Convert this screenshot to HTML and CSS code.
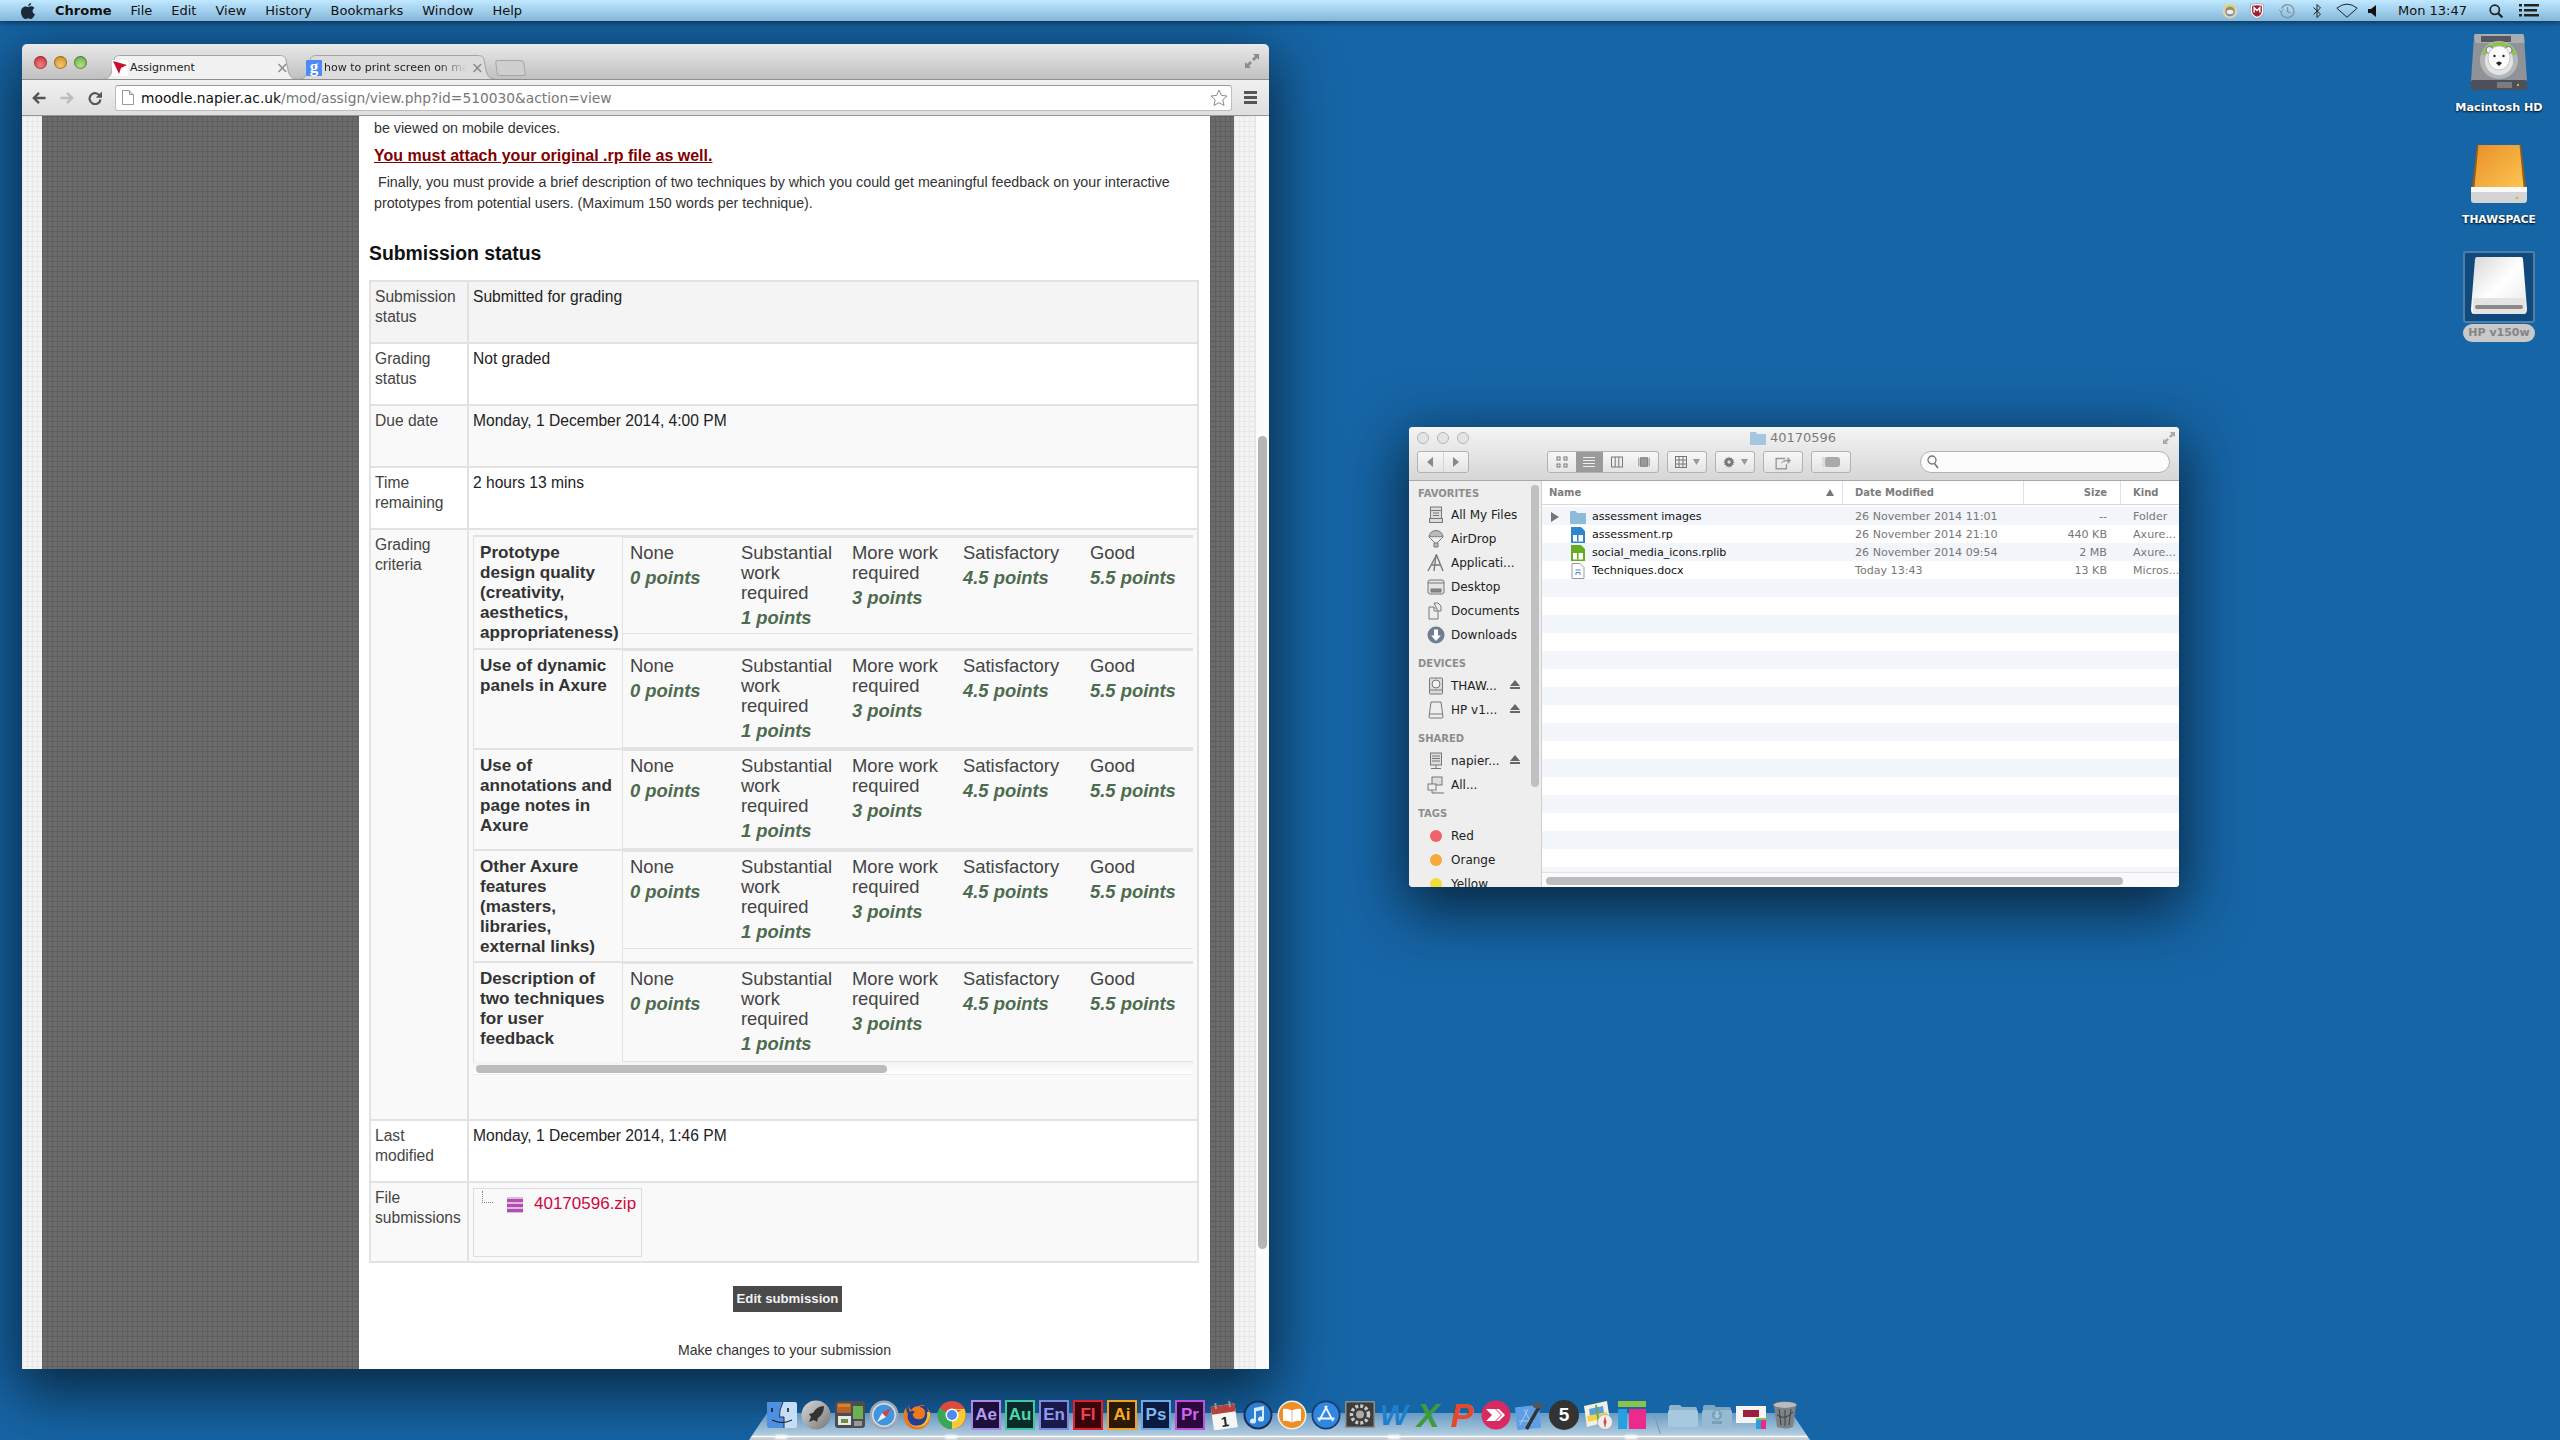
FILE: index.html
```html
<!DOCTYPE html>
<html lang="en">
<head>
  <meta charset="UTF-8">
  <title>Desktop - Assignment</title>
  <link rel="stylesheet" href="styles.css">
</head>
<body>
  <!-- menu bar -->
  <div class="menubar">
    <svg class="apple" viewBox="0 0 16 18"><path d="M11.2 1c.1 1.500-1.300 3.200-3 3.100C8 2.600 9.600 1.100 11.200 1zM8.300 5c.9 0 1.700-.7 3-.7 1.200 0 2.400.6 3.100 1.700-2.700 1.500-2.200 5.200.6 6.300-.8 2-2.400 4.700-3.900 4.700-1.200 0-1.600-.8-2.900-.8-1.400 0-1.800.8-3 .8C3.300 17 1 13.300 1 10c0-3.400 2.200-5.600 4.500-5.600 1.200 0 2.100.6 2.800.6z"/></svg>
    <span class="menu-app">Chrome</span>
    <span>File</span>
    <span>Edit</span>
    <span>View</span>
    <span>History</span>
    <span>Bookmarks</span>
    <span>Window</span>
    <span>Help</span>
    <div class="status">
      <svg class="st-monkey" viewBox="0 0 16 16"><circle cx="8" cy="8" r="7.500" fill="#d9d3b8"/><path d="M2 6a6.500 6.500 0 0 1 12 0z" fill="#e6cf5a"/><circle cx="8" cy="8.500" r="4.800" fill="#8b8b8b"/><ellipse cx="8" cy="9" rx="3.400" ry="2.200" fill="#eee"/></svg>
      <svg class="st-shield" viewBox="0 0 16 17"><path d="M1 1.500Q8-.5 15 1.500V9c0 3.500-3.500 6-7 7.500C4.500 15 1 12.500 1 9z" fill="#fff" stroke="#888" stroke-width=".6"/><path d="M2.800 3Q8 1.600 13.200 3v6c0 2.500-2.600 4.500-5.200 5.700C5.400 13.500 2.800 11.500 2.800 9z" fill="#a11f33"/><path d="M5 10V5l3 3 3-3v5" fill="none" stroke="#fff" stroke-width="1.500"/></svg>
      <svg class="st-clock" viewBox="0 0 16 16" fill="none" stroke="#8494a2" stroke-width="1.300"><path d="M2.500 5.500A6.500 6.500 0 1 1 2 9"/><path d="M0 6.500l2 2.500 2.500-2.500" stroke-width="1"/><path d="M8.500 4v4.500l3 1.500"/></svg>
      <svg class="st-bt" viewBox="0 0 10 16" fill="none" stroke="#222" stroke-width="1"><path d="M1.500 4.500l7 6.500L5 14.500v-13L8.500 5l-7 6.500"/></svg>
      <svg class="st-wifi" viewBox="0 0 22 15" fill="none" stroke="#222" stroke-width="1"><path d="M.8 5.200Q11-3 21.200 5.200L11 14.200z"/></svg>
      <svg class="st-vol" viewBox="0 0 8 12"><path d="M0 4h3l5-4v12L3 8H0z" fill="#111"/></svg>
      <span class="clock">Mon 13:47</span>
      <svg class="st-search" viewBox="0 0 14 14" fill="none" stroke="#222" stroke-width="1.700"><circle cx="5.800" cy="5.800" r="4.600"/><path d="M9.200 9.200l4.200 4.200" stroke-width="2.200"/></svg>
      <svg class="st-list" viewBox="0 0 20 13" fill="#222"><rect x="0" y="0" width="3" height="2.500"/><rect x="5" y="0" width="15" height="2.500"/><rect x="0" y="5" width="3" height="2.500"/><rect x="5" y="5" width="13" height="2.500"/><rect x="0" y="10" width="3" height="2.500"/><rect x="5" y="10" width="15" height="2.500"/></svg>
    </div>
  </div>

  <!-- desktop volumes -->
  <div class="volumes">
    <div class="volume vol-hd">
      <svg class="vol-icon" viewBox="0 0 56 58">
        <path d="M5 1h46q2 0 2 2l3 45H0L3 3q0-2 2-2z" fill="#8f9296"/>
        <path d="M5 1h46q2 0 2 2l.5 7h-49L3 3q0-2 2-2z" fill="#a9acb0"/>
        <rect x="0" y="47" width="56" height="10" rx="1.500" fill="#4c5058"/>
        <rect x="26" y="49" width="15" height="6" fill="#787b80"/>
        <circle cx="47" cy="52" r="1" fill="#e8d84a"/>
        <rect x="10" y="3" width="30" height="6" fill="#55585c"/>
        <circle cx="28" cy="27" r="19" fill="#b4b7ba"/>
        <path d="M12 22a17 17 0 0 1 32 0" fill="none" stroke="#8cc63f" stroke-width="3"/>
        <circle cx="28" cy="28" r="14" fill="#e4e4e4"/>
        <circle cx="18.500" cy="17" r="3.500" fill="#eee" stroke="#555" stroke-width=".7"/>
        <circle cx="37.500" cy="17" r="3.500" fill="#eee" stroke="#555" stroke-width=".7"/>
        <ellipse cx="28" cy="25" rx="11" ry="12" fill="#fbfbfb" stroke="#999" stroke-width=".5"/>
        <circle cx="23.500" cy="23" r="1.200" fill="#222"/>
        <circle cx="32.500" cy="23" r="1.200" fill="#222"/>
        <path d="M25 30q3-3 6 0l-3 3z" fill="#222"/>
      </svg>
      <span class="vol-label">Macintosh HD</span>
    </div>
    <div class="volume vol-thaw">
      <svg class="vol-icon" viewBox="0 0 56 58">
        <defs><linearGradient id="thaw" x1="0" y1="0" x2="1" y2="1"><stop offset="0" stop-color="#e8902a"/><stop offset="1" stop-color="#fdc450"/></linearGradient></defs>
        <path d="M6 0h44l5 42H1z" fill="#9c5d10"/>
        <path d="M7.500 0h41l4 42H3.500z" fill="url(#thaw)"/>
        <rect x="0" y="42" width="56" height="16" rx="3" fill="#d4d4d4"/>
        <rect x="0" y="42" width="56" height="5" fill="#fafafa"/>
        <circle cx="46" cy="53" r="1.300" fill="#d9b93a"/>
      </svg>
      <span class="vol-label vol-label-caps">THAWSPACE</span>
    </div>
    <div class="volume vol-hp">
      <div class="vol-selected">
        <svg class="vol-icon" viewBox="0 0 56 58">
          <defs><linearGradient id="hp" x1="0" y1="0" x2="1" y2="1"><stop offset="0" stop-color="#d6d6d6"/><stop offset=".5" stop-color="#fff"/><stop offset="1" stop-color="#e8e8e8"/></linearGradient></defs>
          <path d="M6 0h44q2 0 2 2l4 50q0 5-3 5H3q-3 0-3-5L4 2q0-2 2-2z" fill="url(#hp)"/>
          <path d="M2 41h52v16H2z" fill="#e4e4e4"/>
          <rect x="4" y="48" width="48" height="4" rx="2" fill="#8a8a8a"/>
        </svg>
      </div>
      <span class="vol-pill">HP v150w</span>
    </div>
  </div>

  <!-- chrome window -->
  <div class="window browser">
    <div class="tabstrip">
      <div class="lights">
        <i class="light red"></i><i class="light amber"></i><i class="light green"></i>
      </div>
      <div class="tab tab-active">
        <svg class="tab-shape" viewBox="0 0 194 24" preserveAspectRatio="none"><path d="M0 24C6 24 8 20 9 15L11 5C12 1 14 .5 18 .5H176C180 .5 182 1 183 5L185 15C186 20 188 24 194 24" fill="#f1f1f1" stroke="#a3a3a3"/></svg>
        <span class="favicon fav-napier"><svg viewBox="0 0 16 16"><path d="M1 1l14 4-6 3-2 6z" fill="#c8102e"/></svg></span>
        <span class="tab-title">Assignment</span>
        <span class="tab-close">×</span>
      </div>
      <div class="tab tab-back">
        <svg class="tab-shape" viewBox="0 0 196 24" preserveAspectRatio="none"><path d="M0 24C6 24 8 20 9 15L11 5C12 1 14 .5 18 .5H178C182 .5 184 1 185 5L187 15C188 20 190 24 196 24" fill="#dcdcdc" stroke="#a3a3a3"/></svg>
        <span class="favicon fav-google">g</span>
        <span class="tab-title tab-fade">how to print screen on mac</span>
        <span class="tab-close">×</span>
      </div>
      <div class="tab-new"></div>
      <svg class="expand" viewBox="0 0 14 14"><path d="M14 0v6l-2-2-3 3-2-2 3-3-2-2zM0 14V8l2 2 3-3 2 2-3 3 2 2z" fill="#8c8c8c"/></svg>
    </div>
    <div class="toolbar">
      <svg class="nav-icon nav-back" viewBox="0 0 14 14" fill="none" stroke="#555" stroke-width="2.400"><path d="M13.500 7H2M7 1.800L1.800 7 7 12.200"/></svg>
      <svg class="nav-icon nav-fwd" viewBox="0 0 14 14" fill="none" stroke="#bdbdbd" stroke-width="2.400"><path d="M.5 7H12M7 1.800L12.200 7 7 12.200"/></svg>
      <svg class="nav-icon nav-reload" viewBox="0 0 14 14"><path d="M12 5.200A5.500 5.500 0 1 0 12.500 8.500" fill="none" stroke="#555" stroke-width="2.200"/><path d="M14 .5v6.300H7.700z" fill="#555"/></svg>
      <div class="omnibox">
        <svg class="page-icon" viewBox="0 0 12 15"><path d="M.5.500h7l4 4v10H.5z" fill="#fff" stroke="#999"/><path d="M7.500.500v4h4" fill="#ddd" stroke="#999"/></svg>
        <span class="url"><span class="url-host">moodle.napier.ac.uk</span>/mod/assign/view.php?id=510030&amp;action=view</span>
        <svg class="star" viewBox="0 0 18 18"><path d="M9 1l2.400 5.400 5.600.6-4.200 3.800 1.200 5.700L9 13.600 4 16.500l1.200-5.700L1 7l5.600-.6z" fill="#fff" stroke="#8a8a8a"/></svg>
      </div>
      <div class="hamburger"><i></i><i></i><i></i></div>
    </div>
    <div class="viewport">
      <div class="bg-light"></div>
      <div class="bg-dark"></div>
      <div class="page">
        <p class="copy">be viewed on mobile devices.</p>
        <p class="warning">You must attach your original .rp file as well.</p>
        <p class="copy copy-long">&nbsp;Finally, you must provide a brief description of two techniques by which you could get meaningful feedback on your interactive prototypes from potential users. (Maximum 150 words per technique).</p>
        <h2>Submission status</h2>
        <table class="status-table">
          <tr class="row-first"><th>Submission status</th><td>Submitted for grading</td></tr>
          <tr class="row-white"><th>Grading status</th><td>Not graded</td></tr>
          <tr class="row-grey"><th>Due date</th><td>Monday, 1 December 2014, 4:00 PM</td></tr>
          <tr class="row-white"><th>Time remaining</th><td>2 hours 13 mins</td></tr>
          <tr class="row-grey row-rubric">
            <th>Grading criteria</th>
            <td class="rubric-cell">
              <div class="rubric">
                <div class="crit-row">
                  <div class="crit">Prototype<br>design quality<br>(creativity,<br>aesthetics,<br>appropriateness)</div>
                  <div class="levels">
                    <div class="level">None<em>0 points</em></div>
                    <div class="level">Substantial work required<em>1 points</em></div>
                    <div class="level">More work required<em>3 points</em></div>
                    <div class="level">Satisfactory<em>4.5 points</em></div>
                    <div class="level">Good<em>5.5 points</em></div>
                  </div>
                </div>
                <div class="crit-row">
                  <div class="crit">Use of dynamic<br>panels in Axure</div>
                  <div class="levels">
                    <div class="level">None<em>0 points</em></div>
                    <div class="level">Substantial work required<em>1 points</em></div>
                    <div class="level">More work required<em>3 points</em></div>
                    <div class="level">Satisfactory<em>4.5 points</em></div>
                    <div class="level">Good<em>5.5 points</em></div>
                  </div>
                </div>
                <div class="crit-row">
                  <div class="crit">Use of<br>annotations and<br>page notes in<br>Axure</div>
                  <div class="levels">
                    <div class="level">None<em>0 points</em></div>
                    <div class="level">Substantial work required<em>1 points</em></div>
                    <div class="level">More work required<em>3 points</em></div>
                    <div class="level">Satisfactory<em>4.5 points</em></div>
                    <div class="level">Good<em>5.5 points</em></div>
                  </div>
                </div>
                <div class="crit-row">
                  <div class="crit">Other Axure<br>features<br>(masters,<br>libraries,<br>external links)</div>
                  <div class="levels">
                    <div class="level">None<em>0 points</em></div>
                    <div class="level">Substantial work required<em>1 points</em></div>
                    <div class="level">More work required<em>3 points</em></div>
                    <div class="level">Satisfactory<em>4.5 points</em></div>
                    <div class="level">Good<em>5.5 points</em></div>
                  </div>
                </div>
                <div class="crit-row">
                  <div class="crit">Description of<br>two techniques<br>for user<br>feedback</div>
                  <div class="levels">
                    <div class="level">None<em>0 points</em></div>
                    <div class="level">Substantial work required<em>1 points</em></div>
                    <div class="level">More work required<em>3 points</em></div>
                    <div class="level">Satisfactory<em>4.5 points</em></div>
                    <div class="level">Good<em>5.5 points</em></div>
                  </div>
                </div>
              </div>
              <div class="rubric-scroll"><i></i></div>
            </td>
          </tr>
          <tr class="row-white"><th>Last modified</th><td>Monday, 1 December 2014, 1:46 PM</td></tr>
          <tr class="row-grey row-files">
            <th>File submissions</th>
            <td class="files-cell">
              <div class="filetree">
                <i class="tree-line"></i>
                <svg class="zip-icon" viewBox="0 0 16 16"><rect width="16" height="16" fill="#e0b8e0"/><rect y="2" width="16" height="3" fill="#b04fb0"/><rect y="7" width="16" height="3" fill="#b04fb0"/><rect y="12" width="16" height="3" fill="#b04fb0"/></svg>
                <a class="zip-link">40170596.zip</a>
              </div>
            </td>
          </tr>
        </table>
        <div class="submit-row"><button class="edit-btn">Edit submission</button></div>
        <p class="submit-note">Make changes to your submission</p>
      </div>
      <div class="bg-dark bg-dark-r"></div>
      <div class="bg-light bg-light-r"></div>
      <div class="scrolltrack"><i></i></div>
    </div>
  </div>

  <!-- finder window -->
  <div class="window finder">
    <div class="finder-head">
      <div class="finder-title">
        <div class="f-lights"><i></i><i></i><i></i></div>
        <svg class="title-folder" viewBox="0 0 16 14"><path d="M0 2q0-1 1-1h5l1 2h8q1 0 1 1v9q0 1-1 1H1q-1 0-1-1z" fill="#a4c6df"/></svg>
        <span>40170596</span>
        <svg class="f-expand" viewBox="0 0 14 14"><path d="M14 0v6l-2-2-3 3-2-2 3-3-2-2zM0 14V8l2 2 3-3 2 2-3 3 2 2z" fill="#aaa"/></svg>
      </div>
      <div class="finder-tools">
        <div class="btn btn-nav">
          <span><svg viewBox="0 0 8 12"><path d="M7 1v10L1 6z" fill="#888"/></svg></span>
          <span><svg viewBox="0 0 8 12"><path d="M1 1v10l6-5z" fill="#888"/></svg></span>
        </div>
        <div class="btn btn-views">
          <span><svg viewBox="0 0 12 12" fill="none" stroke="#777"><rect x="1" y="1" width="3" height="3"/><rect x="8" y="1" width="3" height="3"/><rect x="1" y="8" width="3" height="3"/><rect x="8" y="8" width="3" height="3"/></svg></span>
          <span class="seg-on"><svg viewBox="0 0 12 12" stroke="#eee"><path d="M0 1.500h12M0 4.500h12M0 7.500h12M0 10.500h12"/></svg></span>
          <span><svg viewBox="0 0 12 12" fill="none" stroke="#777"><rect x=".5" y="1" width="11" height="10"/><path d="M4.200 1v10M7.800 1v10"/></svg></span>
          <span><svg viewBox="0 0 14 12" fill="none" stroke="#777"><rect x="3" y="1" width="8" height="10" fill="#999"/><path d="M1 1v10M13 1v10"/></svg></span>
        </div>
        <div class="btn btn-menu">
          <svg viewBox="0 0 12 12" fill="none" stroke="#777"><rect x=".5" y=".5" width="11" height="11"/><path d="M.5 4h11M.5 8h11M4 .5v11M8 .5v11"/></svg>
          <svg class="caret" viewBox="0 0 7 6"><path d="M0 0h7L3.500 6z" fill="#999"/></svg>
        </div>
        <div class="btn btn-menu">
          <svg viewBox="0 0 14 14"><path d="M7 .5l1 2 2-.8.4 2.100 2.100.4-.8 2 2 1-2 1 .8 2-2.100.4-.4 2.100-2-.8-1 2-1-2-2 .8-.4-2.100-2.100-.4.8-2-2-1 2-1-.8-2 2.100-.4.4-2.100 2 .8z" fill="#777"/><circle cx="7" cy="7" r="2" fill="#ddd"/></svg>
          <svg class="caret" viewBox="0 0 7 6"><path d="M0 0h7L3.500 6z" fill="#999"/></svg>
        </div>
        <div class="btn btn-single">
          <svg viewBox="0 0 14 13" fill="none" stroke="#999" stroke-width="1.200"><path d="M9 3H1v9h9V8"/><path d="M5 8q1-4 6-4V1.500L14 5l-3 3V5.500Q7 5.500 5 8z" fill="#999" stroke="none"/></svg>
        </div>
        <div class="btn btn-single btn-tag"><i></i></div>
        <div class="searchbox">
          <svg viewBox="0 0 12 14" fill="none" stroke="#777" stroke-width="1.300"><circle cx="5" cy="5" r="4"/><path d="M7.500 8.500L11 13" stroke-width="1.800"/></svg>
        </div>
      </div>
    </div>
    <div class="finder-body">
      <div class="sidebar">
        <div class="side-head side-head-first">FAVORITES</div>
        <div class="side-item"><svg viewBox="0 0 16 18" fill="#dcdcdc" stroke="#777"><rect x="2.500" y="1" width="11" height="3.500"/><rect x="2.500" y="4.500" width="11" height="8"/><rect x="1.500" y="12.500" width="13" height="4"/><path d="M5 7h6M5 9.500h6" fill="none"/></svg>All My Files</div>
        <div class="side-item"><svg viewBox="0 0 16 18" fill="#bbb" stroke="#777"><path d="M1 7a7 6.500 0 0 1 14 0q-1.700-1.500-3.500 0Q9.700 5.500 8 7 6.300 5.500 4.500 7 2.700 5.500 1 7z"/><path d="M1 7l6 6M15 7l-6 6M6 13h4v4H6z"/></svg>AirDrop</div>
        <div class="side-item"><svg viewBox="0 0 18 18" fill="none" stroke="#777" stroke-width="1.400"><path d="M1 17L9.500 1 16 17M5 11h9"/><path d="M9 1l-2 16"/></svg>Applicati...</div>
        <div class="side-item"><svg viewBox="0 0 18 16" fill="#e4e4e4" stroke="#777"><rect x="1" y="1" width="16" height="14" rx="2"/><path d="M1 4h16"/><rect x="4" y="10" width="10" height="3" fill="#888"/></svg>Desktop</div>
        <div class="side-item"><svg viewBox="0 0 16 18" fill="#eee" stroke="#777"><path d="M6 1h4l3 3v5h-3z"/><path d="M1 5h5l4 4v8H1z"/><path d="M6 5v4h4"/></svg>Documents</div>
        <div class="side-item"><svg viewBox="0 0 18 18"><circle cx="9" cy="9" r="8.500" fill="#6f7f90"/><path d="M7 3.500h4v6h3l-5 5.500-5-5.500h3z" fill="#fff"/></svg>Downloads</div>
        <div class="side-head">DEVICES</div>
        <div class="side-item"><svg viewBox="0 0 16 18" fill="#ddd" stroke="#777"><rect x="1.500" y="1" width="13" height="16" rx="1"/><circle cx="8" cy="7" r="4" fill="#f2f2f2"/><path d="M2 13h12"/></svg>THAW...<i class="eject"></i></div>
        <div class="side-item"><svg viewBox="0 0 16 18" fill="#eee" stroke="#777"><path d="M3 1h10l2 15q0 1-1 1H2q-1 0-1-1z"/><path d="M1.500 13h13"/></svg>HP v1...<i class="eject"></i></div>
        <div class="side-head">SHARED</div>
        <div class="side-item"><svg viewBox="0 0 16 18" fill="#ddd" stroke="#777"><rect x="2.500" y="1" width="11" height="12"/><path d="M4 4h8M4 6.500h8M4 9h8M8 13v3M3 16.500h10"/></svg>napier...<i class="eject"></i></div>
        <div class="side-item"><svg viewBox="0 0 18 18" fill="#ddd" stroke="#777"><rect x="5" y="1" width="10" height="8"/><rect x="1" y="8" width="8" height="6" fill="#eee"/><path d="M5 14v3h12"/></svg>All...</div>
        <div class="side-head">TAGS</div>
        <div class="side-item"><i class="tag tag-red"></i>Red</div>
        <div class="side-item"><i class="tag tag-orange"></i>Orange</div>
        <div class="side-item"><i class="tag tag-yellow"></i>Yellow</div>
        <i class="side-scroll"></i>
      </div>
      <div class="listpane">
        <div class="list-head">
          <span class="col-name">Name<svg viewBox="0 0 8 7"><path d="M4 0l4 7H0z" fill="#777"/></svg></span>
          <span class="col-date">Date Modified</span>
          <span class="col-size">Size</span>
          <span class="col-kind">Kind</span>
        </div>
        <div class="list-rows">
          <div class="file">
            <span class="col-name"><svg class="disclose" viewBox="0 0 8 10"><path d="M0 0l8 5-8 5z" fill="#777"/></svg><svg class="file-icon" viewBox="0 0 16 14"><path d="M0 2q0-1 1-1h5l1 2h8q1 0 1 1v9q0 1-1 1H1q-1 0-1-1z" fill="#8fbbdb"/></svg><b>assessment images</b></span>
            <span class="col-date">26 November 2014 11:01</span><span class="col-size">--</span><span class="col-kind">Folder</span>
          </div>
          <div class="file">
            <span class="col-name"><svg class="file-icon" viewBox="0 0 14 16"><path d="M0 0h10l4 4v12H0z" fill="#2f86cf"/><rect x="2" y="6" width="10" height="8.500" fill="#fff"/><rect x="2" y="6" width="10" height="2" fill="#2f86cf"/><rect x="6" y="8" width="1.500" height="6.500" fill="#2f86cf"/></svg><b>assessment.rp</b></span>
            <span class="col-date">26 November 2014 21:10</span><span class="col-size">440 KB</span><span class="col-kind">Axure...</span>
          </div>
          <div class="file">
            <span class="col-name"><svg class="file-icon" viewBox="0 0 14 16"><path d="M0 0h10l4 4v12H0z" fill="#63ad1f"/><rect x="2" y="6" width="10" height="8.500" fill="#fff"/><rect x="2" y="6" width="10" height="2" fill="#63ad1f"/><rect x="6" y="8" width="1.500" height="6.500" fill="#63ad1f"/></svg><b>social_media_icons.rplib</b></span>
            <span class="col-date">26 November 2014 09:54</span><span class="col-size">2 MB</span><span class="col-kind">Axure...</span>
          </div>
          <div class="file">
            <span class="col-name"><svg class="file-icon" viewBox="0 0 14 16"><path d="M1 .5h8l4 4v11H1z" fill="#fff" stroke="#999"/><path d="M5 12V9.500h4V12M4.500 7h5" fill="none" stroke="#3c87c4"/></svg><b>Techniques.docx</b></span>
            <span class="col-date">Today 13:43</span><span class="col-size">13 KB</span><span class="col-kind">Micros...</span>
          </div>
        </div>
        <div class="list-scroll"><i></i></div>
      </div>
    </div>
  </div>

  <!-- dock -->
  <div class="dock">
    <div class="dock-icons">
      <svg class="dk" viewBox="0 0 30 30"><rect y="2" width="30" height="26" rx="2" fill="#c6def5"/><path d="M2 2h14q-4 8-3.500 15H17v11H2q-2 0-2-2V4q0-2 2-2z" fill="#4d8fe0"/><path d="M5 8v4M21 8v4" stroke="#111" stroke-width="1.500"/><path d="M5 20q10 5 20 0" fill="none" stroke="#111" stroke-width="1"/><path d="M16 2q-4 8-3.500 15H17v11" fill="none" stroke="#234" stroke-width="1"/></svg>
      <svg class="dk" viewBox="0 0 30 30"><defs><linearGradient id="lp" x1="0" y1="0" x2="1" y2="1"><stop offset="0" stop-color="#d8d8d8"/><stop offset="1" stop-color="#777"/></linearGradient></defs><circle cx="15" cy="15" r="14.500" fill="url(#lp)"/><path d="M23 6q-7 0-11 7l-4 1 2 3-2 5 5-2 3 2 1-4q6-4 6-12z" fill="#333"/></svg>
      <svg class="dk" viewBox="0 0 30 30"><rect y="1" width="30" height="27" rx="3" fill="#4a4d52"/><rect x="2.500" y="3.500" width="13" height="9" fill="#d9822b"/><rect x="2.500" y="7" width="13" height="5.500" fill="#b9632a"/><rect x="18" y="6" width="10" height="13" fill="#6eb04f"/><rect x="3" y="16" width="13" height="9" fill="#e8e8e8"/><rect x="6" y="19" width="7" height="4" fill="#6d8f3e"/><rect x="19" y="21" width="8" height="5" fill="#999"/></svg>
      <svg class="dk" viewBox="0 0 30 30"><circle cx="15" cy="15" r="14.500" fill="#9fa6ad"/><circle cx="15" cy="15" r="12" fill="#d8dde2"/><circle cx="15" cy="15" r="10.500" fill="#3f95e0"/><path d="M22 8L13 13l4 4z" fill="#e23b3b"/><path d="M8 22l5-9 4 4z" fill="#f2f2f2"/></svg>
      <svg class="dk" viewBox="0 0 30 30"><circle cx="15.500" cy="15" r="11.500" fill="#23408f"/><path d="M5 5q1 4 3 5 3-4 8-4 4-2 6 0-5-1-5 1 5 1 5 6 0 5-4 6-6 1-8-3-1-3 2-4-3-3-5 0-2-5-2-7zM24 7q6 8 1 17-5 6-12 5.500Q4 29 1 20q-2-6 2-13 0 4 2 7-2 8 5 12 9 3 15-4 2-8-1-15z" fill="#ec7a1d"/><path d="M27 12q1 8-5 13-7 4-13 0 8 2 12-2 4-5 3-11z" fill="#f9bb2d"/></svg>
      <svg class="dk" viewBox="0 0 30 30"><circle cx="15" cy="15" r="14" fill="#dd4b3e"/><path d="M15 15L27 8.500A14 14 0 0 1 15 29z" fill="#f7ca36"/><path d="M15 15L15 29A14 14 0 0 1 2.500 8z" fill="#3aa757"/><path d="M15 9h12.500v1H15z" fill="#f7ca36"/><circle cx="15" cy="15" r="6.500" fill="#fff"/><circle cx="15" cy="15" r="5" fill="#4a8bf0"/></svg>
      <span class="dk adobe ae">Ae</span>
      <span class="dk adobe au">Au</span>
      <span class="dk adobe en">En</span>
      <span class="dk adobe fl">Fl</span>
      <span class="dk adobe ai">Ai</span>
      <span class="dk adobe ps">Ps</span>
      <span class="dk adobe pr">Pr</span>
      <svg class="dk" viewBox="0 0 30 30"><g transform="rotate(-8 15 15)"><rect x="3" y="5" width="24" height="24" rx="1" fill="#f6f6f6"/><rect x="3" y="5" width="24" height="8" fill="#b5403c"/><rect x="7" y="2" width="2" height="6" fill="#999"/><rect x="21" y="2" width="2" height="6" fill="#999"/><text x="15" y="26.500" font-family="Liberation Sans" font-weight="bold" font-size="14" text-anchor="middle" fill="#222">1</text></g></svg>
      <svg class="dk" viewBox="0 0 30 30"><circle cx="15" cy="15" r="14.500" fill="#1b2f55"/><circle cx="15" cy="15" r="12.500" fill="#2c7fd2"/><path d="M11 8l10-2v13a3 2.500 0 1 1-2-2.300V10l-6 1.300V21a3 2.500 0 1 1-2-2.300z" fill="#d7ecfb"/></svg>
      <svg class="dk" viewBox="0 0 30 30"><circle cx="15" cy="15" r="14.500" fill="#f3f0e8"/><circle cx="15" cy="15" r="13" fill="#ee8f26"/><path d="M6 9q5-1 9 1.500Q19 8 24 9v12q-5-1-9 1.500Q11 20 6 21z" fill="#fff"/><path d="M15 10.500v12" stroke="#d88" stroke-width=".7"/></svg>
      <svg class="dk" viewBox="0 0 30 30"><circle cx="15" cy="15" r="14.500" fill="#1c3a6e"/><circle cx="15" cy="15" r="12.800" fill="#2f87e0"/><path d="M16 6L8 21M14 6l8 15M6.500 18.500h17" fill="none" stroke="#f2f6fb" stroke-width="1.800"/></svg>
      <svg class="dk" viewBox="0 0 30 30"><rect y="1" width="30" height="27" rx="1" fill="#8f8f8f"/><rect x="1.500" y="2.500" width="27" height="24" fill="#3c3c3c"/><circle cx="15" cy="14.500" r="8.500" fill="none" stroke="#c9c9c9" stroke-width="3.500" stroke-dasharray="3 2"/><circle cx="15" cy="14.500" r="4" fill="#aaa"/></svg>
      <span class="dk letter l-w">W</span>
      <span class="dk letter l-x">X</span>
      <span class="dk letter l-p">P</span>
      <svg class="dk" viewBox="0 0 30 30"><circle cx="15" cy="15" r="14.500" fill="#d92a5f"/><path d="M5 9h9l6 6-6 6H5l6-6zM15 9h3l6 6-6 6h-3l6-6z" fill="#fff"/></svg>
      <svg class="dk" viewBox="0 0 30 30"><rect x="1" y="6" width="24" height="23" rx="1" fill="#5d9ee5" transform="rotate(-6 13 17)"/><path d="M9 9l8 16M13 9l-8 16M4 21h15" fill="none" stroke="#a8cdf2" stroke-width="1"/><path d="M10 28L22 7l3 1.500L13 30z" fill="#333"/><path d="M17 4q5-3 11 1l1 2-2 1-3-1-2 2-4-2z" fill="#555"/></svg>
      <span class="dk five">5</span>
      <svg class="dk" viewBox="0 0 30 30"><path d="M1 6L24 1l3 20L4 27z" fill="#f3f0df"/><path d="M6 9l14-3 1 7-14 3z" fill="#5aa0e0"/><path d="M4 16l20-4 1 5-20 5z" fill="#f2d24b"/><path d="M13 5l3 19" stroke="#6aa84f" stroke-width="2"/><circle cx="22" cy="22" r="7.500" fill="#eee" stroke="#999" stroke-width=".6"/><path d="M22 16l1.500 6-1.500 6-1.500-6z" fill="#d44"/></svg>
      <svg class="dk" viewBox="0 0 30 30"><rect x="1" y="1" width="28" height="6" fill="#8bc34a"/><rect x="1" y="9" width="9" height="20" fill="#27a0e0"/><rect x="12" y="9" width="17" height="20" fill="#ec2a8c"/></svg>
      <i class="dock-sep"></i>
      <svg class="dk" viewBox="0 0 30 30"><path d="M1 7q0-2 2-2h9l2 2h13q2 0 2 2v2H1z" fill="#8fb4cc"/><rect x="0" y="10" width="30" height="17" rx="2" fill="#a7c9df"/></svg>
      <svg class="dk" viewBox="0 0 30 30"><path d="M1 7q0-2 2-2h9l2 2h13q2 0 2 2v2H1z" fill="#7fa6c0"/><rect x="0" y="10" width="30" height="17" rx="2" fill="#96bad2"/><circle cx="15" cy="15" r="5" fill="#7a9fb8"/><path d="M13.500 11h3v4h2l-3.500 4-3.500-4h2z" fill="#a7c9df"/><rect x="10" y="21" width="10" height="3" fill="#7a9fb8"/></svg>
      <svg class="dk" viewBox="0 0 30 30"><rect x="0" y="6" width="30" height="17" fill="#f4f4f4"/><rect x="7" y="10" width="16" height="7" fill="#9c1f3f"/><rect x="20" y="20" width="5" height="9" fill="#27a0e0"/><rect x="25" y="20" width="5" height="9" fill="#ec2a8c"/><rect x="20" y="18" width="10" height="2" fill="#8bc34a"/></svg>
      <svg class="dk" viewBox="0 0 30 30"><ellipse cx="15" cy="5" rx="12" ry="3.500" fill="#b9bcbf" stroke="#555" stroke-width=".6"/><path d="M4 6l3 21q8 3 16 0l3-21q-11 4-22 0z" fill="#7d8287"/><path d="M9 9l2 16M15 10v16M21 9l-2 16M7 15q8 6 16-3" fill="none" stroke="#3d4144" stroke-width="1"/></svg>
    </div>
    <i class="dot dot-finder"></i>
    <i class="dot dot-chrome"></i>
    <i class="dot dot-word"></i>
    <i class="dot dot-pink"></i>
  </div>
</body>
</html>
```

FILE: styles.css
```css
html, body {
  margin: 0;
  padding: 0;
}

body {
  width: 2560px;
  height: 1440px;
  position: relative;
  overflow: hidden;
  background-color: #1665a6;
  font-family: "Liberation Sans", Arial, sans-serif;
}

/* menu bar */
.menubar {
  height: 21px;
  position: relative;
  z-index: 5;
  display: flex;
  align-items: center;
  gap: 19px;
  padding-left: 20px;
  font: 13px/21px "DejaVu Sans", sans-serif;
  color: #111;
  background: linear-gradient(#c0e8ff, #84b7da);
  box-shadow: 0 1px 6px rgba(0, 0, 0, 0.6);
}

.apple {
  width: 16px;
  height: 18px;
  fill: #1c2a38;
}

.menu-app {
  font-weight: bold;
}

.status {
  margin-left: auto;
  padding-right: 21px;
  display: flex;
  align-items: center;
}

.st-monkey, .st-shield, .st-clock { width: 16px; height: 16px; }
.st-shield { margin-left: 11px; }
.st-clock { margin-left: 14px; }
.st-bt { width: 10px; height: 16px; margin-left: 17px; }
.st-wifi { width: 22px; height: 15px; margin-left: 14px; }
.st-vol { width: 8px; height: 12px; margin-left: 10px; }
.clock { margin-left: 22px; width: 73px; white-space: nowrap; }
.st-search { width: 14px; height: 14px; margin-left: 18px; }
.st-list { width: 20px; height: 13px; margin-left: 16px; }

/* desktop volumes */
.volumes {
  position: absolute;
  left: 2438px;
  top: 21px;
  width: 122px;
  display: flex;
  flex-direction: column;
  align-items: center;
}

.volume {
  display: flex;
  flex-direction: column;
  align-items: center;
}

.vol-icon {
  width: 56px;
  height: 58px;
}

.vol-label {
  font: bold 11.200px/16px "DejaVu Sans", sans-serif;
  color: #fff;
  text-shadow: 0 1px 2px #000;
  margin-top: 9px;
}

.vol-label-caps {
  font-size: 10.700px;
}

.vol-hd { padding-top: 12px; }
.vol-thaw { padding-top: 29px; }
.vol-hp { padding-top: 23px; }

.vol-selected {
  width: 72px;
  height: 72px;
  box-sizing: border-box;
  border: 2px solid #4f7fa6;
  border-radius: 3px;
  background-color: #104a7c;
  display: flex;
  justify-content: center;
  padding-top: 4px;
}

.vol-pill {
  width: 72px;
  height: 18px;
  margin-top: 1px;
  text-align: center;
  border-radius: 9px;
  background-color: #c9c9c9;
  color: #858585;
  font: bold 11px/18px "DejaVu Sans", sans-serif;
}

/* windows on the desktop */
.window {
  position: absolute;
  box-shadow: 0 18px 60px 6px rgba(0, 0, 0, 0.62);
  border-radius: 5px 5px 0 0;
  overflow: hidden;
  display: flex;
  flex-direction: column;
}

.browser {
  left: 22px;
  top: 44px;
  width: 1247px;
  height: 1325px;
}

.tabstrip {
  height: 36px;
  flex: none;
  box-sizing: border-box;
  display: flex;
  align-items: flex-end;
  position: relative;
  background: linear-gradient(#e9e9e9, #c0c0c0);
  border-bottom: 1px solid #8e8e8e;
  font: 11px/16px "DejaVu Sans", sans-serif;
  color: #222;
}

.lights {
  position: absolute;
  left: 12px;
  top: 12px;
  display: flex;
  gap: 7px;
}

.light {
  width: 13px;
  height: 13px;
  border-radius: 50%;
  box-shadow: inset 0 0 0 1px rgba(0, 0, 0, 0.3);
}

.red { background: radial-gradient(circle at 50% 70%, #f08080, #c8232c); }
.amber { background: radial-gradient(circle at 50% 70%, #f6c36b, #c98618); }
.green { background: radial-gradient(circle at 50% 70%, #b3e08a, #57a03a); }

.tab {
  height: 24px;
  position: relative;
  display: flex;
  align-items: center;
  flex: none;
  box-sizing: border-box;
  padding-top: 1px;
}

.tab-active {
  width: 194px;
  margin-left: 81px;
  padding-left: 9px;
}

.tab-back {
  width: 196px;
  margin-left: 2px;
  padding-left: 7px;
}

.tab-back .tab-close {
  margin-right: 13px;
}

.tab-shape {
  position: absolute;
  left: 0;
  top: 0;
  width: 100%;
  height: 100%;
}

.favicon {
  width: 16px;
  height: 16px;
  position: relative;
  flex: none;
}

.fav-napier { background-color: #fff; }
.fav-napier svg { width: 16px; height: 16px; display: block; }

.fav-google {
  background-color: #4c8bf5;
  color: #fff;
  font: bold 17px/13px "Liberation Serif", serif;
  text-align: center;
  border-radius: 1px;
}

.tab-title {
  position: relative;
  margin-left: 2px;
  flex: 1;
  white-space: nowrap;
  overflow: hidden;
}

.tab-fade {
  -webkit-mask-image: linear-gradient(90deg, #000 80%, transparent);
  mask-image: linear-gradient(90deg, #000 80%, transparent);
}

.tab-close {
  position: relative;
  width: 11px;
  margin: 0 10px 0 4px;
  font-size: 15px;
  color: #888;
  text-align: center;
}

.tab-new {
  width: 29px;
  height: 16px;
  margin: 0 0 3px 1px;
  border: 1px solid #a6a6a6;
  border-radius: 3px 4px 3px 3px;
  box-sizing: border-box;
  transform: skewX(8deg);
  background-color: #cfcfcf;
}

.expand {
  position: absolute;
  left: 1223px;
  top: 10px;
  width: 14px;
  height: 14px;
}

.toolbar {
  height: 36px;
  flex: none;
  box-sizing: border-box;
  display: flex;
  align-items: center;
  background: linear-gradient(#f1f1f1, #dedede);
  border-bottom: 1px solid #979797;
}

.nav-icon {
  width: 14px;
  height: 14px;
  flex: none;
}

.nav-back { margin-left: 10px; }
.nav-fwd { margin-left: 14px; }
.nav-reload { margin-left: 14px; }

.omnibox {
  width: 1117px;
  height: 26px;
  margin-left: 13px;
  box-sizing: border-box;
  flex: none;
  display: flex;
  align-items: center;
  background-color: #fff;
  border: 1px solid #bdbdbd;
  border-top-color: #9c9c9c;
  border-radius: 3px;
}

.page-icon {
  width: 12px;
  height: 15px;
  margin-left: 6px;
}

.url {
  margin-left: 7px;
  font: 13.800px/24px "DejaVu Sans", sans-serif;
  color: #777;
  white-space: nowrap;
}

.url-host { color: #111; }

.star {
  width: 18px;
  height: 18px;
  margin-left: auto;
  margin-right: 3px;
}

.hamburger {
  margin-left: 12px;
  width: 13px;
  display: flex;
  flex-direction: column;
  gap: 2px;
}

.hamburger i {
  height: 3px;
  background-color: #555;
}

/* page in the browser */
.viewport {
  flex: 1;
  min-height: 0;
  display: grid;
  grid-template-columns: 20px 317px 851px 24px 21px 14px;
  background-color: #fff;
  overflow: hidden;
}

.bg-light {
  background-color: #f3f3f3;
  background-image:
    linear-gradient(#e8e8e8 1px, transparent 1px),
    linear-gradient(90deg, #e8e8e8 1px, transparent 1px);
  background-size: 5px 5px;
}

.bg-dark {
  background-color: #6b6b6b;
  background-image:
    linear-gradient(#5f5f5f 1px, transparent 1px),
    linear-gradient(90deg, #5f5f5f 1px, transparent 1px);
  background-size: 5px 5px;
}

.scrolltrack {
  background-color: #fbfbfb;
  border-left: 1px solid #e6e6e6;
  position: relative;
}

.scrolltrack i {
  position: absolute;
  left: 2px;
  right: 2px;
  top: 320px;
  height: 813px;
  border-radius: 5px;
  background-color: #b5b5b5;
}

.page {
  min-width: 0;
  padding-top: 2px;
  font-size: 14.250px;
  color: #333;
}

.page p {
  margin: 0;
}

.copy {
  padding-left: 15px;
  line-height: 20px;
}

.copy-long {
  line-height: 21px;
  padding-right: 12px;
  margin-top: 6px !important;
}

.warning {
  margin-top: 8px !important;
  padding-left: 15px;
  font-size: 16px;
  line-height: 20px;
  font-weight: bold;
  color: #800000;
  text-decoration: underline;
}

h2 {
  margin: 27px 0 15px 10px;
  font-size: 19.400px;
  line-height: 24px;
  color: #111;
}

.status-table {
  margin-left: 10px;
  width: 830px;
  border-collapse: collapse;
  table-layout: fixed;
  font-size: 15.600px;
  line-height: 20px;
  border: 2px solid #e2e2e2;
}

.status-table tr {
  height: 62px;
}

.status-table th,
.status-table td {
  box-sizing: border-box;
  padding: 5px 4px;
  border: 2px solid #e2e2e2;
  vertical-align: top;
  text-align: left;
}

.status-table th {
  width: 98px;
  font-weight: normal;
  color: #444;
}

.status-table td {
  color: #222;
}

.row-first { background-color: #f4f4f4; }
.row-grey { background-color: #f9f9f9; }
.row-white { background-color: #fff; }

.status-table .row-rubric { height: 591px; }
.status-table .row-files { height: 80px; }
.status-table .files-cell { padding-bottom: 3px; }

/* rubric */
.rubric {
  width: 720px;
}

.crit-row {
  display: flex;
}

.crit {
  width: 150px;
  flex: none;
  box-sizing: border-box;
  padding: 6px 0 5px 6px;
  border: 1px solid #e2e2e2;
  border-width: 2px 1px 0 1px;
  font-size: 17.100px;
  font-weight: bold;
  white-space: nowrap;
  color: #333;
}

.crit-row:nth-child(4) .crit {
  padding-bottom: 4px;
}

.levels {
  flex: 1;
  align-self: flex-start;
  display: grid;
  grid-template-columns: 111px 111px 111px 127px 1fr;
  box-sizing: border-box;
  padding: 5px 0 6px 7px;
  border-top: 3px solid #e2e2e2;
  border-bottom: 1px solid #e2e2e2;
  font-size: 18.400px;
  color: #444;
}

.crit-row:first-child .levels {
  padding-bottom: 5px;
}

.crit-row:nth-child(3) .levels,
.crit-row:nth-child(5) .levels {
  padding-bottom: 7px;
}

.level em {
  display: block;
  margin-top: 5px;
  font-weight: bold;
  font-style: italic;
  color: #4d6b4f;
}

.rubric-scroll {
  height: 13px;
  width: 720px;
  box-sizing: border-box;
  padding: 3px 0 0 3px;
  background: linear-gradient(#f2f2f2, #fff);
  border-bottom: 1px solid #ececec;
}

.rubric-scroll i {
  display: block;
  width: 411px;
  height: 8px;
  border-radius: 4px;
  background-color: #bcbcbc;
}

/* file tree */
.filetree {
  width: 169px;
  height: 69px;
  box-sizing: border-box;
  border: 1px solid #dedede;
  display: flex;
  align-items: flex-start;
  padding: 8px 0 0 33px;
  position: relative;
}

.tree-line {
  position: absolute;
  left: 8px;
  top: 2px;
  width: 10px;
  height: 11px;
  border-left: 1px dotted #888;
  border-bottom: 1px dotted #888;
}

.zip-icon {
  width: 16px;
  height: 16px;
  flex: none;
}

.zip-link {
  margin: -1px 0 0 11px;
  font-size: 17px;
  line-height: 16px;
  color: #d0063e;
}

.submit-row {
  margin-top: 23px;
  padding-left: 6px;
  text-align: center;
}

.edit-btn {
  width: 109px;
  height: 26px;
  padding: 0;
  border: 0;
  display: inline-block;
  vertical-align: top;
  background-color: #4a4a4a;
  color: #f2f2f2;
  font: bold 13.200px/26px "Liberation Sans", sans-serif;
}

.submit-note {
  margin-top: 28px !important;
  text-align: center;
  line-height: 20px;
  font-size: 14.100px;
}

/* finder window */
.finder {
  left: 1409px;
  top: 427px;
  width: 770px;
  height: 460px;
  background-color: #fff;
  border-radius: 4px;
}

.finder-head {
  height: 54px;
  flex: none;
  box-sizing: border-box;
  background: linear-gradient(#f4f4f4, #d6d6d6);
  border-bottom: 1px solid #a9a9a9;
}

.finder-title {
  height: 22px;
  position: relative;
  display: flex;
  align-items: center;
  justify-content: center;
  font: 13px/22px "DejaVu Sans", sans-serif;
  color: #7c7c7c;
}

.title-folder {
  width: 16px;
  height: 14px;
  margin-right: 4px;
  margin-left: -2px;
}

.f-lights {
  position: absolute;
  left: 8px;
  top: 5px;
  display: flex;
  gap: 8px;
}

.f-lights i {
  width: 12px;
  height: 12px;
  box-sizing: border-box;
  border-radius: 50%;
  border: 1px solid #b5b5b5;
  background-color: #e4e4e4;
}

.f-expand {
  position: absolute;
  right: 4px;
  top: 5px;
  width: 12px;
  height: 12px;
}

.finder-tools {
  height: 22px;
  margin-top: 2px;
  padding-left: 8px;
  display: flex;
  gap: 8px;
}

.btn {
  height: 22px;
  box-sizing: border-box;
  display: flex;
  align-items: center;
  justify-content: center;
  flex: none;
  border: 1px solid #b2b2b2;
  border-radius: 3px;
  background: linear-gradient(#f7f7f7, #e4e4e4);
  overflow: hidden;
}

.btn span {
  flex: 1;
  height: 100%;
  display: flex;
  align-items: center;
  justify-content: center;
}

.btn svg {
  width: 12px;
  height: 12px;
}

.btn-nav { width: 52px; }
.btn-nav span + span { border-left: 1px solid #d5d5d5; }

.btn-views {
  width: 112px;
  margin-left: 70px;
}

.btn-views .seg-on {
  background-color: #9a9a9a;
}

.btn-menu {
  width: 40px;
  gap: 6px;
}

.btn .caret {
  width: 7px;
  height: 6px;
}

.btn-single {
  width: 40px;
}

.btn-single svg {
  width: 16px;
  height: 15px;
}

.btn-tag i {
  width: 18px;
  height: 10px;
  border-radius: 3px;
  background-color: #a9a9a9;
  box-shadow: inset 3px 0 0 #ddd;
}

.searchbox {
  width: 250px;
  height: 22px;
  margin-left: 61px;
  box-sizing: border-box;
  border: 1px solid #b2b2b2;
  border-radius: 11px;
  background-color: #fcfcfc;
  display: flex;
  align-items: center;
  padding-left: 6px;
}

.searchbox svg {
  width: 12px;
  height: 14px;
}

.finder-body {
  flex: 1;
  min-height: 0;
  display: flex;
}

.sidebar {
  width: 133px;
  flex: none;
  box-sizing: border-box;
  position: relative;
  overflow: hidden;
  padding-left: 9px;
  background-color: #eeeeee;
  border-right: 1px solid #cfcfcf;
  font: 12px/24px "DejaVu Sans", sans-serif;
  color: #222;
}

.side-head {
  height: 21px;
  padding-top: 6px;
  font-size: 10px;
  line-height: 21px;
  font-weight: bold;
  color: #8d8d8d;
}

.side-head-first {
  height: 20px;
  padding-top: 2px;
}

.side-item {
  height: 24px;
  display: flex;
  align-items: center;
  padding-left: 9px;
  white-space: nowrap;
  position: relative;
}

.side-item svg {
  width: 18px;
  height: 18px;
  flex: none;
  margin-right: 6px;
}

.eject {
  position: absolute;
  left: 92px;
  top: 6px;
  width: 0;
  height: 0;
  border-left: 5px solid transparent;
  border-right: 5px solid transparent;
  border-bottom: 6px solid #666;
}

.eject::after {
  content: "";
  position: absolute;
  left: -5px;
  top: 7px;
  width: 10px;
  height: 2px;
  background-color: #666;
}

.tag {
  width: 12px;
  height: 12px;
  border-radius: 50%;
  margin: 0 9px 0 3px;
  flex: none;
}

.tag-red { background-color: #f0636b; }
.tag-orange { background-color: #f8a93c; }
.tag-yellow { background-color: #f0dc3a; }

.side-scroll {
  position: absolute;
  left: 122px;
  top: 4px;
  width: 8px;
  height: 302px;
  border-radius: 4px;
  background-color: #c0c0c0;
}

.listpane {
  flex: 1;
  min-width: 0;
  display: flex;
  flex-direction: column;
  background-color: #fff;
}

.list-head,
.file {
  display: grid;
  grid-template-columns: 300px 181px 97px 1fr;
  white-space: nowrap;
}

.list-head {
  height: 24px;
  flex: none;
  box-sizing: border-box;
  border-bottom: 1px solid #d8d8d8;
  font: bold 10px/23px "DejaVu Sans", sans-serif;
  color: #7c7c7c;
}

.list-head .col-name {
  padding-left: 7px;
  display: flex;
  align-items: center;
  justify-content: space-between;
  padding-right: 8px;
}

.list-head svg {
  width: 8px;
  height: 7px;
}

.col-date {
  padding-left: 12px;
  border-left: 1px solid #e2e2e2;
}

.col-size {
  padding-right: 13px;
  text-align: right;
  border-left: 1px solid #e2e2e2;
}

.col-kind {
  padding-left: 12px;
  border-left: 1px solid #e2e2e2;
  overflow: hidden;
}

.list-rows {
  flex: 1;
  min-height: 0;
  padding-top: 3px;
  background: repeating-linear-gradient(#f2f5fa 0 18px, #fff 18px 36px);
  background-position: 0 2px;
  background-repeat: no-repeat;
  font: 11.100px/18px "DejaVu Sans", sans-serif;
  color: #777;
}

.file {
  height: 18px;
}

.file .col-name {
  display: flex;
  align-items: center;
  padding-left: 28px;
  position: relative;
}

.file .col-name b {
  font-weight: normal;
  color: #111;
}

.file .col-date,
.file .col-size,
.file .col-kind {
  border-left-color: transparent;
}

.file-icon {
  width: 16px;
  height: 16px;
  margin-right: 6px;
  flex: none;
}

.disclose {
  position: absolute;
  left: 9px;
  top: 4px;
  width: 8px;
  height: 10px;
}

.list-scroll {
  height: 15px;
  flex: none;
  box-sizing: border-box;
  padding: 4px 0 0 4px;
  background-color: #fafafa;
  border-top: 1px solid #e2e2e2;
}

.list-scroll i {
  display: block;
  width: 577px;
  height: 8px;
  border-radius: 4px;
  background-color: #bcbcbc;
}

/* dock */
.dock {
  position: absolute;
  left: 749px;
  bottom: 0;
  width: 1061px;
  height: 40px;
  z-index: 4;
}

.dock::before {
  content: "";
  position: absolute;
  left: 0;
  right: 0;
  bottom: 0;
  height: 27px;
  clip-path: polygon(18px 0, 1043px 0, 100% 100%, 0 100%);
  background: linear-gradient(rgba(170, 200, 220, 0.55) 0, rgba(205, 222, 234, 0.85) 22px, #fff 23.500px, #c5cbd1 25px);
}

.dock-icons {
  position: relative;
  display: flex;
  padding-left: 16px;
}

.dk {
  width: 30px;
  height: 30px;
  margin: 0 2px;
  flex: none;
  display: block;
  box-sizing: border-box;
}

.adobe {
  border: 2px solid;
  font: bold 17px/26px "Liberation Sans", sans-serif;
  text-align: center;
}

.ae { background-color: #1c0f3a; border-color: #a88aea; color: #b79cf5; }
.au { background-color: #0b2b2a; border-color: #3ec9a2; color: #4dd6ad; }
.en { background-color: #1a1a4a; border-color: #7f88e0; color: #929bf0; }
.fl { background-color: #3a0508; border-color: #e02030; color: #f04050; }
.ai { background-color: #2a1a05; border-color: #f5a020; color: #f8a828; }
.ps { background-color: #0a1a40; border-color: #6aa8e8; color: #7fb8f0; }
.pr { background-color: #2a0a3a; border-color: #c050e0; color: #d060f0; }

.letter {
  font: italic bold 34px/30px "Liberation Sans", sans-serif;
  text-align: center;
}

.l-w { color: #1f7fcf; font-size: 30px; }
.l-x { color: #3e9a3a; }
.l-p { color: #e8482a; }

.five {
  border-radius: 50%;
  background-color: #333;
  color: #fff;
  font: bold 19px/30px "Liberation Sans", sans-serif;
  text-align: center;
}

.dock-sep {
  width: 17px;
  flex: none;
  position: relative;
}

.dock-sep::after {
  content: "";
  position: absolute;
  left: 8px;
  top: 16px;
  width: 1px;
  height: 18px;
  background-color: #7f99ad;
  transform: rotate(-18deg);
}

.dot {
  position: absolute;
  bottom: 2px;
  width: 10px;
  height: 2px;
  background-color: #fff;
  box-shadow: 0 0 3px 1px #fff;
}

.dot-finder { left: 27px; }
.dot-chrome { left: 197px; }
.dot-word { left: 640px; }
.dot-pink { left: 877px; }
```
